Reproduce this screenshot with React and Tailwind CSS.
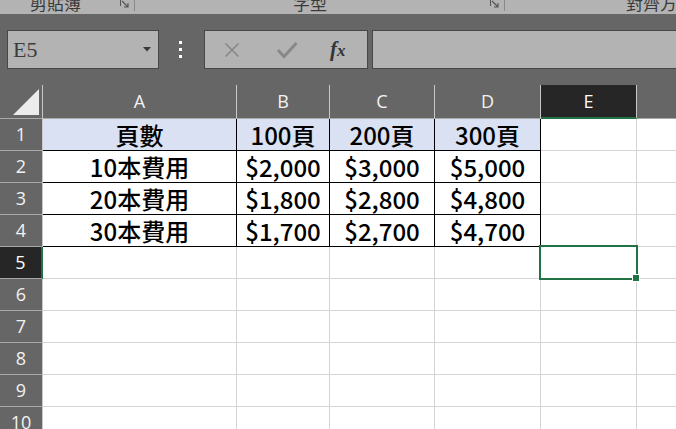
import React from "react";

const cellFont = { fontFamily: '"Noto Sans CJK TC", "Noto Sans", sans-serif' };

const colHeads = [
  { k: "A", w: "w-[194px]" },
  { k: "B", w: "w-[93px]" },
  { k: "C", w: "w-[105px]" },
  { k: "D", w: "w-[106px]" },
];

const data = [
  ["頁數", "100頁", "200頁", "300頁"],
  ["10本費用", "$2,000", "$3,000", "$5,000"],
  ["20本費用", "$1,800", "$2,800", "$4,800"],
  ["30本費用", "$1,700", "$2,700", "$4,700"],
];

function Launcher() {
  return (
    <svg width="18" height="12" viewBox="0 0 18 12" className="shrink-0">
      <path d="M1.5 0 V7 M1.5 0.5 H6" stroke="#555" strokeWidth="1" fill="none" />
      <path d="M3 2 L9 8 M5 8 H9 V4" stroke="#555" strokeWidth="1.2" fill="none" />
      <path d="M15.5 0 V12" stroke="#888" strokeWidth="1" />
    </svg>
  );
}

function RowHead({ n, active }) {
  return (
    <div
      className={
        "w-[43px] shrink-0 h-full flex items-center justify-center text-[18px] border-b border-[#a9a9a9] " +
        (active
          ? "bg-[#262626] text-white border-r-2 border-r-[#217346]"
          : "bg-[#666666] text-[#f2f2f2] border-r border-r-[#c8c8c8]")
      }
      style={{ fontFamily: '"Open Sans", "Noto Sans", sans-serif', fontWeight: 400 }}
    >
      {n}
    </div>
  );
}

export default function App() {
  return (
    <div className="w-[676px] h-[429px] overflow-hidden bg-[#666666] relative">
      {/* ribbon remnant */}
      <div className="h-[14px] bg-[#b3b3b3] overflow-hidden relative text-[#3a3a3a]" style={cellFont}>
        <div className="flex items-start h-full whitespace-nowrap">
          <span className="ml-[30px] text-[17px] leading-[17px] mt-[-6px] shrink-0">剪貼簿</span>
          <div className="ml-[38px] mt-[-1px] shrink-0"><Launcher /></div>
          <span className="ml-[156px] text-[17px] leading-[17px] mt-[-6px] shrink-0">字型</span>
          <div className="ml-[162px] mt-[-1px] shrink-0"><Launcher /></div>
          <span className="ml-[119px] text-[17px] leading-[17px] mt-[-6px] shrink-0">對齊方式</span>
        </div>
      </div>

      {/* formula bar row */}
      <div className="flex items-start pt-[16px] h-[71px]">
        <div className="ml-[7px] w-[152px] h-[39px] bg-[#b3b3b3] border border-[#474747] flex items-center justify-between pl-[5px] pr-[7px]">
          <span className="text-[22px] text-[#3c3c3c] leading-none" style={{ fontFamily: '"Liberation Serif", serif' }}>E5</span>
          <svg width="8" height="5" viewBox="0 0 8 5"><path d="M0 0 H8 L4 4.5 Z" fill="#3a3a3a" /></svg>
        </div>
        <div className="ml-[20px] w-[3px] h-[39px] flex flex-col items-center justify-center gap-[4px]">
          <div className="w-[3px] h-[3px] bg-white" />
          <div className="w-[3px] h-[3px] bg-white" />
          <div className="w-[3px] h-[3px] bg-white" />
        </div>
        <div className="ml-[22px] w-[164px] h-[39px] bg-[#b3b3b3] border border-[#474747] flex items-center">
          <svg width="16" height="16" viewBox="0 0 16 16" className="ml-[19px]">
            <path d="M1.5 1.5 L14.5 14.5 M14.5 1.5 L1.5 14.5" stroke="#888" strokeWidth="1.6" />
          </svg>
          <svg width="22" height="18" viewBox="0 0 22 18" className="ml-[36px]">
            <path d="M2 9 L8 15.5 L20.5 2" stroke="#888" strokeWidth="3" fill="none" />
          </svg>
          <span className="ml-[32px] text-[21px] italic font-bold text-[#333] leading-none" style={{ fontFamily: '"Liberation Serif", serif' }}>
            f<span className="text-[17px]">x</span>
          </span>
        </div>
        <div className="ml-[4px] flex-1 h-[39px] bg-[#b3b3b3] border border-[#474747] border-r-0" />
      </div>

      {/* grid */}
      <div className="relative" style={cellFont}>
        {/* column header */}
        <div className="flex h-[34px]">
          <div className="w-[43px] shrink-0 h-full border-r border-[#c8c8c8] border-b border-b-[#a9a9a9] flex items-end justify-end pr-[3px] pb-[3px]">
            <svg width="26" height="26" viewBox="0 0 26 26"><path d="M26 0 V26 H0 Z" fill="#ececec" /></svg>
          </div>
          {colHeads.map((c) => (
            <div
              key={c.k}
              className={c.w + " shrink-0 h-full border-r border-[#c8c8c8] border-b border-b-[#a9a9a9] flex items-center justify-center text-[18px] text-[#f2f2f2]"}
              style={{ fontFamily: '"Open Sans", "Noto Sans", sans-serif' }}
            >
              {c.k}
            </div>
          ))}
          <div
            className="w-[96px] shrink-0 h-full bg-[#262626] border-r border-[#c8c8c8] border-b-2 border-b-[#217346] flex items-center justify-center text-[18px] text-white"
            style={{ fontFamily: '"Open Sans", "Noto Sans", sans-serif' }}
          >
            E
          </div>
          <div className="flex-1 h-full border-b border-b-[#a9a9a9]" />
        </div>

        {/* data rows */}
        {data.map((row, i) => (
          <div key={i} className="flex h-[32px]">
            <RowHead n={i + 1} />
            {row.map((v, j) => (
              <div
                key={j}
                className={
                  colHeads[j].w +
                  " shrink-0 h-full border-r border-b border-black flex items-center justify-center text-[24px] leading-none font-medium text-black " +
                  (i === 0 ? "bg-[#d9e1f2]" : "bg-white")
                }
              >
                {v}
              </div>
            ))}
            <div className="w-[96px] shrink-0 h-full bg-white border-r border-b border-[#d4d4d4]" />
            <div className="flex-1 h-full bg-white border-b border-[#d4d4d4]" />
          </div>
        ))}

        {/* empty rows */}
        {[5, 6, 7, 8, 9, 10].map((n) => (
          <div key={n} className="flex h-[32px]">
            <RowHead n={n} active={n === 5} />
            {colHeads.map((c) => (
              <div key={c.k} className={c.w + " shrink-0 h-full bg-white border-r border-b border-[#d4d4d4]"} />
            ))}
            <div className="w-[96px] shrink-0 h-full bg-white border-r border-b border-[#d4d4d4]" />
            <div className="flex-1 h-full bg-white border-b border-[#d4d4d4]" />
          </div>
        ))}

        {/* selection E5 */}
        <div className="absolute left-[539px] top-[160px] w-[99px] h-[35px] border-2 border-[#217346]" />
        <div className="absolute left-[632px] top-[189px] w-[8px] h-[8px] bg-[#217346] border border-white" />
      </div>
    </div>
  );
}
